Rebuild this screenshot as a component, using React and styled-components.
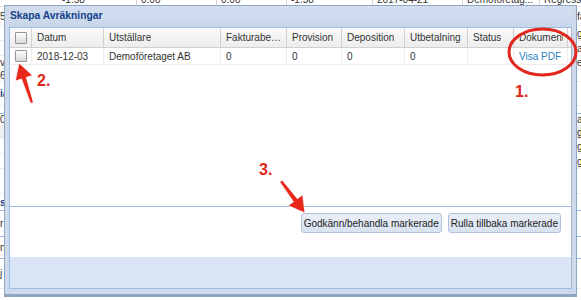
import React from "react";
import styled, { createGlobalStyle } from "styled-components";

const GlobalStyle = createGlobalStyle`
  html, body {
    margin: 0;
    padding: 0;
    background: #fff;
  }
  body {
    font-family: "Liberation Sans", Arial, sans-serif;
    font-size: 10px;
    color: #333;
  }
`;

const Stage = styled.div`
  position: relative;
  width: 581px;
  height: 300px;
  overflow: hidden;
  background: #fff;
`;

/* ---------- page behind the dialog ---------- */

const Backdrop = styled.div`
  display: flex;
  flex-direction: column;
  width: 640px;
`;

const TopRow = styled.div`
  display: flex;
  align-items: flex-end;
  height: 6px;
  border-bottom: 1px solid #e2e2e2;
`;

const TopCell = styled.div`
  flex: none;
  width: ${p => p.w}px;
  box-sizing: border-box;
  padding-left: 4px;
  line-height: 12px;
  border-right: 1px solid #d6d6d6;
  white-space: nowrap;
  overflow: hidden;
`;

const BgRow = styled.div`
  display: grid;
  grid-template-columns: 58px 518px 64px;
  align-items: center;
  height: ${p => p.h}px;
  box-sizing: border-box;
  border-bottom: 1px solid ${p => (p.line ? "#99bbe8" : "#ececec")};
  background: ${p => (p.shade ? "#efefef" : "transparent")};
`;

const BgText = styled.span`
  padding-left: ${p => (p.right ? "1px" : "0")};
  white-space: nowrap;
  font-weight: ${p => (p.strong ? "bold" : "normal")};
  color: ${p => (p.strong ? "#15428b" : "#333")};
`;

/* ---------- dialog ---------- */

const Window = styled.div`
  position: absolute;
  left: 4px;
  top: 5px;
  width: 573px;
  height: 292px;
  box-sizing: border-box;
  display: flex;
  flex-direction: column;
  padding: 0 4px 5px;
  background: #cedaeb;
  border: 1px solid #8ea6c8;
  border-bottom: 3px solid #8ea4c2;
`;

const Title = styled.div`
  flex: none;
  height: 21px;
  line-height: 20px;
  padding-left: 1px;
  font-size: 10.3px;
  font-weight: bold;
  color: #15428b;
  background: linear-gradient(#d3def0, #c8d5e9);
`;

const Body = styled.div`
  flex: 1;
  display: flex;
  flex-direction: column;
  background: #fff;
  border: 1px solid #99bbe8;
  border-right-color: #a9b6c6;
`;

const Grid = styled.div`
  flex: none;
  height: 179px;
  box-sizing: border-box;
  border-bottom: 1px solid #99bbe8;
`;

const GridRow = styled.div`
  display: flex;
  height: ${p => (p.head ? 20 : 17)}px;
  box-sizing: border-box;
  border-bottom: 1px solid ${p => (p.head ? "#d0d0d0" : "#ededed")};
  background: ${p => (p.head ? "linear-gradient(#fafafa, #ededed)" : "#fff")};
`;

const Cell = styled.div`
  flex: none;
  width: ${p => p.w}px;
  box-sizing: border-box;
  display: flex;
  align-items: center;
  justify-content: ${p => (p.center ? "center" : "flex-start")};
  padding: ${p => (p.center ? "0" : "0 4px 0 5px")};
  border-right: 1px solid ${p => (p.head ? "#d0d0d0" : "#ededed")};
  white-space: nowrap;
  overflow: hidden;
  color: #333;
`;

const CellText = styled.span`
  overflow: hidden;
  text-overflow: ${p => (p.clip ? "clip" : "ellipsis")};
  white-space: nowrap;
`;

const Gutter = styled.div`
  flex: 1;
`;

const Check = styled.span`
  display: block;
  width: 12px;
  height: 12px;
  box-sizing: border-box;
  margin-left: 1px;
  border: 1px solid #959595;
  border-radius: 1px;
  background: linear-gradient(#fdfdfd, #d9d9d9);
`;

const Link = styled.span`
  color: #2684c6;
`;

const ButtonBar = styled.div`
  flex: none;
  height: 50px;
  display: flex;
  justify-content: flex-end;
  align-items: flex-start;
  gap: 6px;
  padding: 6px 10px 0 0;
  box-sizing: border-box;
`;

const Button = styled.button`
  height: 20px;
  padding: 0 2px;
  font-family: "Liberation Sans", Arial, sans-serif;
  font-size: 10px;
  color: #222;
  background: linear-gradient(#e9eff8, #d8e2f0);
  border: 1px solid #b3c2d8;
  border-radius: 3px;
`;

const Footer = styled.div`
  flex: 1;
  background: #d9e4f4;
`;

/* ---------- annotations ---------- */

const Marks = styled.svg`
  position: absolute;
  left: 0;
  top: 0;
  pointer-events: none;
`;

const Number = styled.span`
  position: absolute;
  left: ${p => p.x}px;
  top: ${p => p.y}px;
  font-family: "Liberation Sans", Arial, sans-serif;
  font-size: 16px;
  line-height: 16px;
  font-weight: bold;
  color: #e2261b;
  text-shadow: 1px 1px 0 #fff, -1px 0 1px #fff, 0 -1px 1px #fff;
`;

const topCells = [
  { w: 58, t: "" },
  { w: 79, t: "-1.58" },
  { w: 80, t: "0.00" },
  { w: 70, t: "0.00" },
  { w: 86, t: "-1.58" },
  { w: 90, t: "2017-04-21" },
  { w: 77, t: "Demoföretag..." },
  { w: 80, t: "Regress" }
];

const bgRows = [
  { h: 19, l: "5", r: "faktura" },
  { h: 15, r: "gira" },
  { h: 15, r: "avgift" },
  { h: 14, l: "v", r: "el" },
  { h: 12, l: "6" },
  { h: 24, l: "ia", strong: true },
  { h: 8, line: true },
  { h: 12, l: "0", r: "avgift" },
  { h: 13, shade: true, r: "gira" },
  { h: 15, r: "gira" },
  { h: 15, r: "gira" },
  { h: 25 },
  { h: 17, l: "s", strong: true, line: true },
  { h: 26, l: "r", line: true },
  { h: 22, l: "n", line: true },
  { h: 30, l: "j" }
];

const columns = [
  { key: "check", w: 22 },
  { key: "datum", w: 72, title: "Datum", value: "2018-12-03" },
  { key: "utst", w: 117, title: "Utställare", value: "Demoföretaget AB" },
  { key: "fakt", w: 66, title: "Fakturabelopp", value: "0" },
  { key: "prov", w: 55, title: "Provision", value: "0" },
  { key: "dep", w: 63, title: "Deposition", value: "0" },
  { key: "utb", w: 63, title: "Utbetalning", value: "0" },
  { key: "status", w: 46, title: "Status", value: "" },
  { key: "dok", w: 54, title: "Dokument", value: "Visa PDF", link: true }
];

const Arrow = ({ points }) => (
  <polygon
    points={points}
    fill="#e8281b"
    stroke="#fff"
    strokeOpacity="0.7"
    strokeWidth="1"
    strokeLinejoin="round"
  />
);

const App = () => (
  <Stage>
    <GlobalStyle />
    <Backdrop>
      <TopRow>
        {topCells.map((c, i) => (
          <TopCell key={i} w={c.w}>
            {c.t}
          </TopCell>
        ))}
      </TopRow>
      {bgRows.map((r, i) => (
        <BgRow key={i} h={r.h} line={r.line} shade={r.shade}>
          <BgText strong={r.strong}>{r.l}</BgText>
          <span />
          <BgText right>{r.r}</BgText>
        </BgRow>
      ))}
    </Backdrop>

    <Window>
      <Title>Skapa Avräkningar</Title>
      <Body>
        <Grid>
          <GridRow head>
            {columns.map(c => (
              <Cell key={c.key} w={c.w} head center={c.key === "check"}>
                {c.key === "check" ? (
                  <Check />
                ) : (
                  <CellText clip={c.key === "dok"}>{c.title}</CellText>
                )}
              </Cell>
            ))}
            <Gutter />
          </GridRow>
          <GridRow>
            {columns.map(c => (
              <Cell key={c.key} w={c.w} center={c.key === "check"}>
                {c.key === "check" ? (
                  <Check />
                ) : c.link ? (
                  <Link>{c.value}</Link>
                ) : (
                  <CellText>{c.value}</CellText>
                )}
              </Cell>
            ))}
            <Gutter />
          </GridRow>
        </Grid>
        <ButtonBar>
          <Button>Godkänn/behandla markerade</Button>
          <Button>Rulla tillbaka markerade</Button>
        </ButtonBar>
        <Footer />
      </Body>
    </Window>

    <Marks width="581" height="300" viewBox="0 0 581 300">
      <ellipse
        cx="542.5"
        cy="52"
        rx="33.5"
        ry="23"
        fill="none"
        stroke="#e2261b"
        strokeWidth="3"
      />
      <Arrow points="19,63 32.5,75.4 26.3,77.4 33.4,102.5 30.6,103.5 21.5,79 15.3,81" />
      <Arrow points="305,213 288.2,205.6 293.4,201.7 279.8,181.9 282.2,180.1 297.4,198.7 302.6,194.8" />
    </Marks>
    <Number x={515} y={84}>1.</Number>
    <Number x={37} y={73}>2.</Number>
    <Number x={259} y={162}>3.</Number>
  </Stage>
);

export default App;
